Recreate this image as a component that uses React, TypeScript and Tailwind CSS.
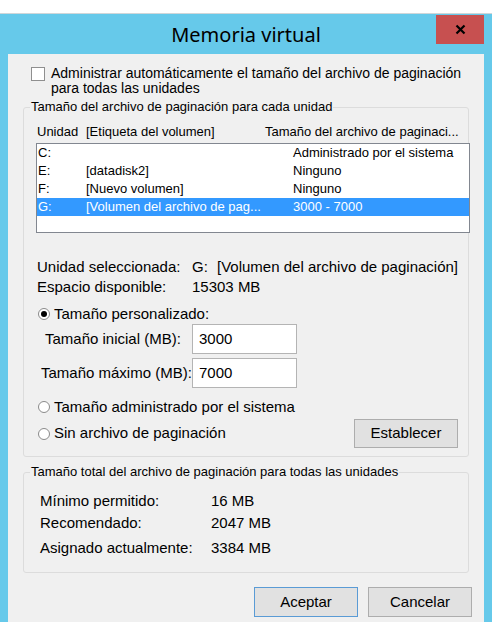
import React from 'react';

const drives = [
  { unit: 'C:', label: '', size: 'Administrado por el sistema' },
  { unit: 'E:', label: '[datadisk2]', size: 'Ninguno' },
  { unit: 'F:', label: '[Nuevo volumen]', size: 'Ninguno' },
  { unit: 'G:', label: '[Volumen del archivo de pag...', size: '3000 - 7000', selected: true },
];

export default function App() {
  return (
    <div className="w-[492px] h-[622px] bg-white pt-[13px] overflow-hidden font-['Liberation_Sans',Arial,sans-serif] text-[14px] text-black">
      <div className="h-[609px] bg-[#66c9ea] border-t border-[#cfd6d9] flex flex-col">
        {/* Title bar */}
        <div className="relative h-[40px] shrink-0 flex items-center justify-center">
          <span className="font-['Noto_Sans',sans-serif] text-[20px] text-black mt-[2px]">Memoria virtual</span>
          <button className="absolute right-[8px] top-[1px] w-[48px] h-[29px] bg-[#c75050] flex items-center justify-center">
            <svg width="11" height="11" viewBox="0 0 11 11">
              <path d="M1.5 1.5 L9.5 9.5 M9.5 1.5 L1.5 9.5" stroke="#000" strokeWidth="2.2" />
            </svg>
          </button>
        </div>

        {/* Client area */}
        <div className="mx-[8px] flex-1 bg-[#f0f0f0] flex flex-col">
          <div className="flex items-start pl-[23px] pt-[12px]">
            <div className="w-[14px] h-[14px] mt-[1px] bg-white border border-[#8f8f8f] shrink-0" />
            <div className="ml-[6px] leading-[15px]">
              Administrar automáticamente el tamaño del archivo de paginación
              <br />
              para todas las unidades
            </div>
          </div>

          {/* Per-drive group */}
          <div className="relative mt-[11px] mx-[15px] h-[350px] border border-[#dcdcdc] rounded-[3px] flex flex-col">
            <span className="absolute left-[6px] top-[-9px] px-[1px] bg-[#f0f0f0] text-[13px] leading-[16px]">
              Tamaño del archivo de paginación para cada unidad
            </span>

            <div className="flex text-[13px] leading-[16px] mt-[16px]">
              <span className="ml-[13px] w-[49px]">Unidad</span>
              <span className="w-[179px]">[Etiqueta del volumen]</span>
              <span>Tamaño del archivo de paginaci...</span>
            </div>

            <div className="mt-[3px] ml-[12px] mr-[-2px] h-[90px] bg-white border border-[#828790] text-[13px]">
              {drives.map((d) => (
                <div
                  key={d.unit}
                  className={`flex h-[18px] items-center ${d.selected ? 'bg-[#3399ff] text-white' : ''}`}
                >
                  <span className="w-[49px] pl-[1px]">{d.unit}</span>
                  <span className="w-[207px]">{d.label}</span>
                  <span>{d.size}</span>
                </div>
              ))}
            </div>

            <div className="text-[15px] flex flex-col">
              <div className="mt-[24px] ml-[13px] leading-[20px]">
                <div className="flex">
                  <span className="w-[155px]">Unidad seleccionada:</span>
                  <span className="w-[25px]">G:</span>
                  <span>[Volumen del archivo de paginación]</span>
                </div>
                <div className="flex">
                  <span className="w-[155px]">Espacio disponible:</span>
                  <span>15303 MB</span>
                </div>
              </div>

              <Radio className="mt-[7px]" checked label="Tamaño personalizado:" />

              <div className="flex items-center h-[30px]">
                <span className="ml-[21px] w-[147px]">Tamaño inicial (MB):</span>
                <Field value="3000" />
              </div>
              <div className="flex items-center h-[30px] mt-[4px]">
                <span className="ml-[17px] w-[151px]">Tamaño máximo (MB):</span>
                <Field value="7000" />
              </div>

              <Radio className="mt-[9px]" label="Tamaño administrado por el sistema" />

              <div className="flex items-center justify-between mt-[2px] h-[29px]">
                <Radio label="Sin archivo de paginación" />
                <button className="mr-[10px] w-[104px] h-[29px] bg-[#e1e1e1] border border-[#adadad]">Establecer</button>
              </div>
            </div>
          </div>

          {/* Totals group */}
          <div className="relative mt-[15px] mx-[15px] h-[101px] border border-[#dcdcdc] rounded-[3px] flex flex-col">
            <span className="absolute left-[6px] top-[-9px] px-[1px] bg-[#f0f0f0] text-[13px] leading-[16px]">
              Tamaño total del archivo de paginación para todas las unidades
            </span>
            <div className="ml-[16px] leading-[20px] text-[15px]">
              <div className="flex mt-[18px]">
                <span className="w-[171px]">Mínimo permitido:</span>
                <span>16 MB</span>
              </div>
              <div className="flex mt-[2px]">
                <span className="w-[171px]">Recomendado:</span>
                <span>2047 MB</span>
              </div>
              <div className="flex mt-[5px]">
                <span className="w-[171px]">Asignado actualmente:</span>
                <span>3384 MB</span>
              </div>
            </div>
          </div>

          <div className="flex justify-end gap-[10px] mt-[14px] mr-[12px] text-[15px]">
            <button className="w-[104px] h-[30px] bg-[#e1e1e1] border border-[#5a9bd5]">Aceptar</button>
            <button className="w-[104px] h-[30px] bg-[#e1e1e1] border border-[#adadad]">Cancelar</button>
          </div>
        </div>
      </div>
    </div>
  );
}

function Radio({ label, checked, className = '' }: { label: string; checked?: boolean; className?: string }) {
  return (
    <div className={`flex items-center h-[20px] ml-[14px] ${className}`}>
      <div className="w-[12px] h-[12px] rounded-full border border-[#8a8a8a] bg-white flex items-center justify-center">
        {checked && <div className="w-[6px] h-[6px] rounded-full bg-black" />}
      </div>
      <span className="ml-[4px]">{label}</span>
    </div>
  );
}

function Field({ value }: { value: string }) {
  return (
    <div className="w-[105px] h-[30px] bg-white border border-[#b4b4b4] flex items-center pl-[6px]">
      {value}
    </div>
  );
}
